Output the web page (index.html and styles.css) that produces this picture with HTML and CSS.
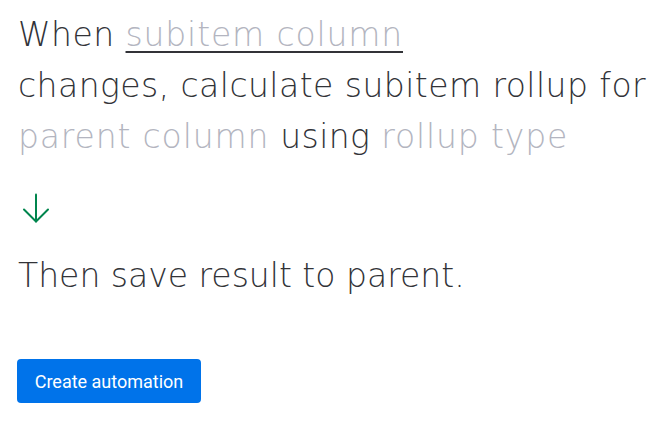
FILE: index.html
```html
<!DOCTYPE html>
<html>
<head>
<meta charset="utf-8">
<link rel="stylesheet" href="styles.css">
</head>
<body>
<main class="recipe">
  <div class="sentence">
    <div class="line">When <span class="field field-active">subitem column</span></div>
    <div class="line">changes, calculate subitem rollup for</div>
    <div class="line"><span class="field">parent column</span> using <span class="field">rollup type</span></div>
  </div>
  <div class="arrow">
    <svg width="28" height="30" viewBox="0 0 28 30" fill="none" stroke="#00854d" stroke-width="2" stroke-linecap="round" stroke-linejoin="round">
      <path d="M14 1.5V28.5"/>
      <path d="M2 16.5L14 28.5L26 16.5"/>
    </svg>
  </div>
  <div class="sentence result">
    <div class="line">Then save result to parent.</div>
  </div>
  <div class="actions">
    <button class="btn-primary">Create automation</button>
  </div>
</main>
</body>
</html>
```
FILE: styles.css
```css
html, body {
  margin: 0;
  background: #ffffff;
}
.recipe {
  padding: 9px 0 0 18px;
  color: #323338;
}
.sentence {
  font-family: "DejaVu Sans", sans-serif;
  font-weight: 200;
  font-size: 33px;
  line-height: 51px;
  letter-spacing: 0.45px;
}
.line {
  white-space: nowrap;
}
.field {
  color: #b3b5c0;
  letter-spacing: 0.85px;
}
.field-active {
  text-decoration: underline;
  text-decoration-color: #323338;
  text-decoration-thickness: 2px;
  text-underline-offset: 5px;
}
.arrow {
  margin: 31px 0 0 4px;
  height: 30px;
}
.arrow svg {
  display: block;
}
.result {
  margin-top: 27px;
  letter-spacing: 0;
}
.actions {
  margin-top: 58px;
  margin-left: -1px;
}
.btn-primary {
  width: 184px;
  height: 44px;
  border: 0;
  border-radius: 4px;
  background: #0073ea;
  color: #ffffff;
  font-family: Roboto, sans-serif;
  font-size: 18px;
  font-weight: 400;
  padding: 0;
  cursor: pointer;
}
```
